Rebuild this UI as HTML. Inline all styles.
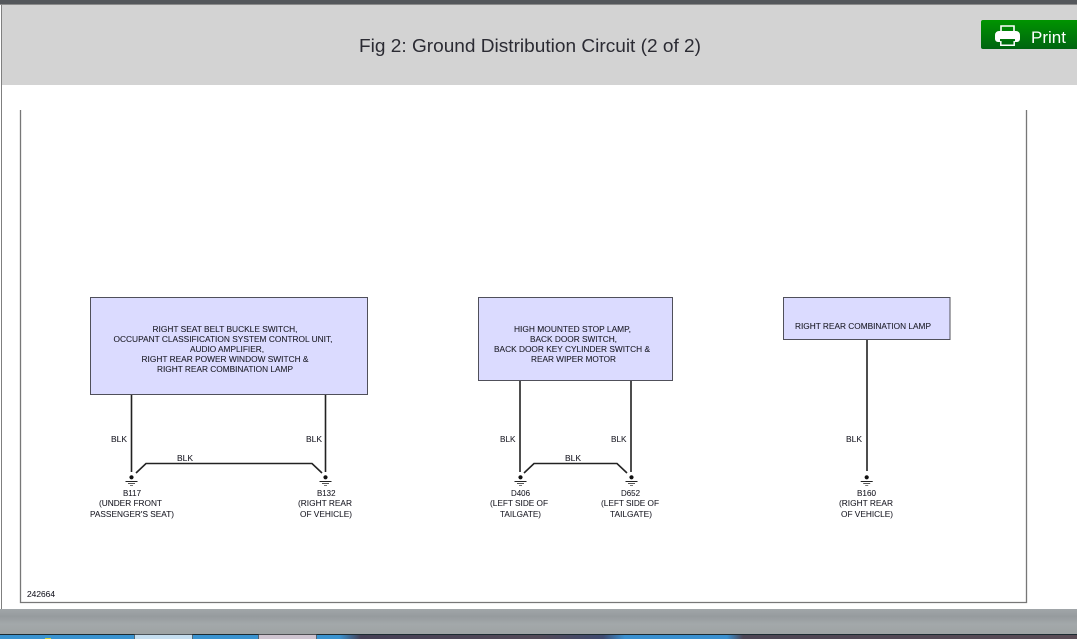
<!DOCTYPE html>
<html><head><meta charset="utf-8"><title>Fig 2: Ground Distribution Circuit (2 of 2)</title>
<style>
html,body{margin:0;padding:0;width:1077px;height:639px;overflow:hidden;background:#fff}
svg{display:block}
.t text{font-family:"Liberation Sans",sans-serif;font-size:8.4px;fill:#1a1a24;stroke:#1a1a24;stroke-width:.08px}
</style></head><body>
<svg width="1077" height="639" viewBox="0 0 1077 639" xmlns="http://www.w3.org/2000/svg">
<defs>
<linearGradient id="g" x1="0" y1="0" x2="0" y2="1"><stop offset="0" stop-color="#009400"/><stop offset="1" stop-color="#006410"/></linearGradient>
<linearGradient id="s" x1="0" y1="0" x2="0" y2="1"><stop offset="0" stop-color="#a1a6a9"/><stop offset=".3" stop-color="#969b9e"/><stop offset=".6" stop-color="#a3a8aa"/><stop offset="1" stop-color="#9ea3a4"/></linearGradient>
<linearGradient id="tb" x1="0" y1="0" x2="1" y2="0">
<stop offset="0" stop-color="#3a93d0"/><stop offset=".315" stop-color="#3a93d0"/><stop offset=".335" stop-color="#453f55"/><stop offset=".5" stop-color="#544a58"/><stop offset=".56" stop-color="#3f4a70"/><stop offset=".58" stop-color="#3a90d0"/><stop offset=".675" stop-color="#3a90d0"/><stop offset=".69" stop-color="#4d4554"/><stop offset="1" stop-color="#5a4c56"/>
</linearGradient>
</defs>
<rect width="1077" height="639" fill="#fff"/>
<rect width="1077" height="4" fill="#54575b"/>
<rect y="4" width="1077" height="1" fill="#8a8a8a"/>
<rect x="2" y="5" width="1075" height="80" fill="#d3d3d3"/>
<rect x="1" y="5" width="1" height="604" fill="#7f7f7f"/>
<text x="359" y="52" font-family="'Liberation Sans',sans-serif" font-size="18.5" fill="#2b2b33" textLength="342" lengthAdjust="spacingAndGlyphs">Fig 2: Ground Distribution Circuit (2 of 2)</text>

<!-- Print button -->
<path d="M1077 20H983a2 2 0 0 0-2 2v25a2 2 0 0 0 2 2h94z" fill="url(#g)"/>
<path d="M1001 31v-5h13v5" fill="none" stroke="#fff" stroke-width="1.6"/>
<path d="M999 31h17a4 4 0 0 1 4 4v4a3 3 0 0 1-3 3h-2v-3h-15v3h-2a3 3 0 0 1-3-3v-4a4 4 0 0 1 4-4z" fill="#fff"/>
<path d="M1000.800 41v4.200h13.400v-4.200" fill="none" stroke="#fff" stroke-width="1.500"/>
<text x="1031" y="43" font-family="'Liberation Sans',sans-serif" font-size="16.500" fill="#fff" textLength="35" lengthAdjust="spacingAndGlyphs">Print</text>

<!-- Diagram frame -->
<path d="M20.500 110V602.500H1026.500V110" fill="none" stroke="#777" stroke-width="1.300"/>

<!-- Boxes -->
<rect x="90.500" y="297.500" width="277" height="97" fill="#dbdbff" stroke="#50505a"/>
<rect x="478.500" y="297.500" width="194" height="83" fill="#dbdbff" stroke="#50505a"/>
<rect x="783.500" y="297.500" width="166.500" height="42" fill="#dbdbff" stroke="#50505a"/>

<!-- Wires -->
<g fill="none" stroke="#222" stroke-width="1.600">
<path d="M131.500 395V472M325.500 395V472M136 473L146 463.500H312L322 473"/>
<path d="M520 381V472M631 381V472M524 473L534 463.500H617L627 473"/>
<path d="M867 340V471"/>
</g>

<!-- Ground symbols -->
<g stroke="#222" fill="none">
<g transform="translate(131.500 0)"><circle cy="477.300" r="2.100" fill="#111" stroke="none"/><path d="M-6 481.500H6" stroke-width="1"/><path d="M-3.500 483.500H3.500" stroke="#555" stroke-width="1"/><path d="M-1.500 485.500H1.500" stroke="#777" stroke-width="1"/></g>
<g transform="translate(325.500 0)"><circle cy="477.300" r="2.100" fill="#111" stroke="none"/><path d="M-6 481.500H6" stroke-width="1"/><path d="M-3.500 483.500H3.500" stroke="#555" stroke-width="1"/><path d="M-1.500 485.500H1.500" stroke="#777" stroke-width="1"/></g>
<g transform="translate(520.500 0)"><circle cy="477.300" r="2.100" fill="#111" stroke="none"/><path d="M-6 481.500H6" stroke-width="1"/><path d="M-3.500 483.500H3.500" stroke="#555" stroke-width="1"/><path d="M-1.500 485.500H1.500" stroke="#777" stroke-width="1"/></g>
<g transform="translate(631.500 0)"><circle cy="477.300" r="2.100" fill="#111" stroke="none"/><path d="M-6 481.500H6" stroke-width="1"/><path d="M-3.500 483.500H3.500" stroke="#555" stroke-width="1"/><path d="M-1.500 485.500H1.500" stroke="#777" stroke-width="1"/></g>
<g transform="translate(866.700 0)"><circle cy="477.300" r="2.100" fill="#111" stroke="none"/><path d="M-6 481.500H6" stroke-width="1"/><path d="M-3.500 483.500H3.500" stroke="#555" stroke-width="1"/><path d="M-1.500 485.500H1.500" stroke="#777" stroke-width="1"/></g>
</g>

<!-- Text -->
<g class="t">
<text x="152.500" y="332" textLength="145" lengthAdjust="spacingAndGlyphs">RIGHT SEAT BELT BUCKLE SWITCH,</text>
<text x="113.500" y="342" textLength="219" lengthAdjust="spacingAndGlyphs">OCCUPANT CLASSIFICATION SYSTEM CONTROL UNIT,</text>
<text x="190" y="352" textLength="74" lengthAdjust="spacingAndGlyphs">AUDIO AMPLIFIER,</text>
<text x="141.500" y="362" textLength="167" lengthAdjust="spacingAndGlyphs">RIGHT REAR POWER WINDOW SWITCH &amp;</text>
<text x="157" y="372" textLength="136" lengthAdjust="spacingAndGlyphs">RIGHT REAR COMBINATION LAMP</text>

<text x="514" y="332" textLength="117" lengthAdjust="spacingAndGlyphs">HIGH MOUNTED STOP LAMP,</text>
<text x="530" y="342" textLength="87" lengthAdjust="spacingAndGlyphs">BACK DOOR SWITCH,</text>
<text x="494" y="352" textLength="156" lengthAdjust="spacingAndGlyphs">BACK DOOR KEY CYLINDER SWITCH &amp;</text>
<text x="531" y="362" textLength="85" lengthAdjust="spacingAndGlyphs">REAR WIPER MOTOR</text>

<text x="795" y="329" textLength="136" lengthAdjust="spacingAndGlyphs">RIGHT REAR COMBINATION LAMP</text>

<text x="111" y="442" textLength="16" lengthAdjust="spacingAndGlyphs">BLK</text>
<text x="306" y="442" textLength="16" lengthAdjust="spacingAndGlyphs">BLK</text>
<text x="177" y="461" textLength="16" lengthAdjust="spacingAndGlyphs">BLK</text>
<text x="500" y="442" textLength="15.500" lengthAdjust="spacingAndGlyphs">BLK</text>
<text x="611" y="442" textLength="15.500" lengthAdjust="spacingAndGlyphs">BLK</text>
<text x="565" y="461" textLength="16" lengthAdjust="spacingAndGlyphs">BLK</text>
<text x="846" y="442" textLength="16" lengthAdjust="spacingAndGlyphs">BLK</text>

<text x="123" y="496" textLength="18" lengthAdjust="spacingAndGlyphs">B117</text>
<text x="99" y="506" textLength="63" lengthAdjust="spacingAndGlyphs">(UNDER FRONT</text>
<text x="90" y="517" textLength="84" lengthAdjust="spacingAndGlyphs">PASSENGER'S SEAT)</text>

<text x="317" y="496" textLength="18.500" lengthAdjust="spacingAndGlyphs">B132</text>
<text x="298" y="506" textLength="54" lengthAdjust="spacingAndGlyphs">(RIGHT REAR</text>
<text x="300" y="517" textLength="52" lengthAdjust="spacingAndGlyphs">OF VEHICLE)</text>

<text x="511" y="496" textLength="19" lengthAdjust="spacingAndGlyphs">D406</text>
<text x="490" y="506" textLength="58" lengthAdjust="spacingAndGlyphs">(LEFT SIDE OF</text>
<text x="500" y="517" textLength="41" lengthAdjust="spacingAndGlyphs">TAILGATE)</text>

<text x="621" y="496" textLength="19" lengthAdjust="spacingAndGlyphs">D652</text>
<text x="601" y="506" textLength="58" lengthAdjust="spacingAndGlyphs">(LEFT SIDE OF</text>
<text x="610" y="517" textLength="42" lengthAdjust="spacingAndGlyphs">TAILGATE)</text>

<text x="857" y="496" textLength="19" lengthAdjust="spacingAndGlyphs">B160</text>
<text x="839" y="506" textLength="54" lengthAdjust="spacingAndGlyphs">(RIGHT REAR</text>
<text x="841" y="517" textLength="52" lengthAdjust="spacingAndGlyphs">OF VEHICLE)</text>

<text x="27" y="597" textLength="28" lengthAdjust="spacingAndGlyphs">242664</text>
</g>

<!-- Bottom strip and taskbar -->
<rect y="609" width="1077" height="25" fill="url(#s)"/>
<rect y="634" width="1077" height="1" fill="#1c2a30"/>
<rect y="635" width="1077" height="4" fill="url(#tb)"/>
<rect x="134.500" y="634.500" width="58" height="5" fill="#c5def0" stroke="#333" stroke-width=".6"/>
<rect x="258.500" y="634.500" width="58" height="5" fill="#cfc4d0" stroke="#333" stroke-width=".6"/>
<rect x="45" y="638" width="6" height="1" fill="#d6d23a"/>
</svg>
</body></html>
